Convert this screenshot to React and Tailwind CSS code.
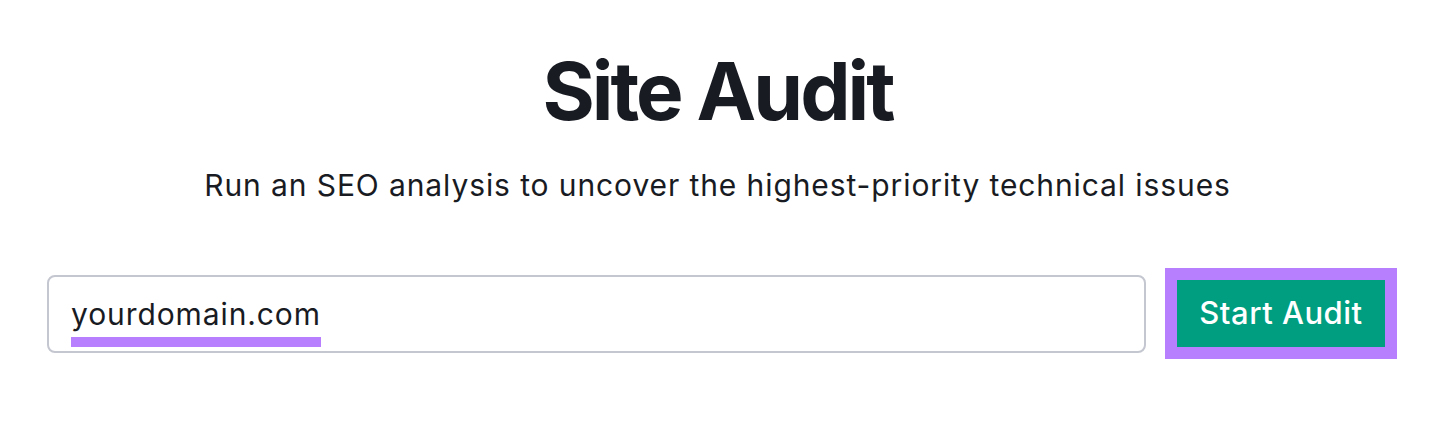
export default function App() {
  return (
    <div className="w-[1435px] h-[431px] bg-white flex flex-col items-center font-['Inter','Noto_Sans',sans-serif] text-[#191b23]">
      <h1 className="mt-[47px] text-[80px] leading-[88px] font-bold tracking-[-3px]">
        Site Audit
      </h1>
      <p className="mt-[32px] text-[30px] leading-[36px] tracking-[0.9px]">
        Run an SEO analysis to uncover the highest-priority technical issues
      </p>
      <div className="mt-[65px] w-full flex items-center pl-[47px]">
        <div className="w-[1099px] h-[78px] border-2 border-[#c4c6d0] rounded-[8px] flex items-center px-[22px]">
          <span className="relative text-[30px] leading-[36px] tracking-[0.9px]">
            yourdomain.com
            <span className="absolute left-0 right-0 top-[41px] h-[10px] bg-[#b77ffd]" />
          </span>
        </div>
        <div className="ml-[19px] p-[12px] bg-[#b77ffd]">
          <button className="w-[208px] h-[67px] bg-[#009e80] text-white text-[31px] font-medium tracking-[0.5px]">
            Start Audit
          </button>
        </div>
      </div>
    </div>
  );
}
